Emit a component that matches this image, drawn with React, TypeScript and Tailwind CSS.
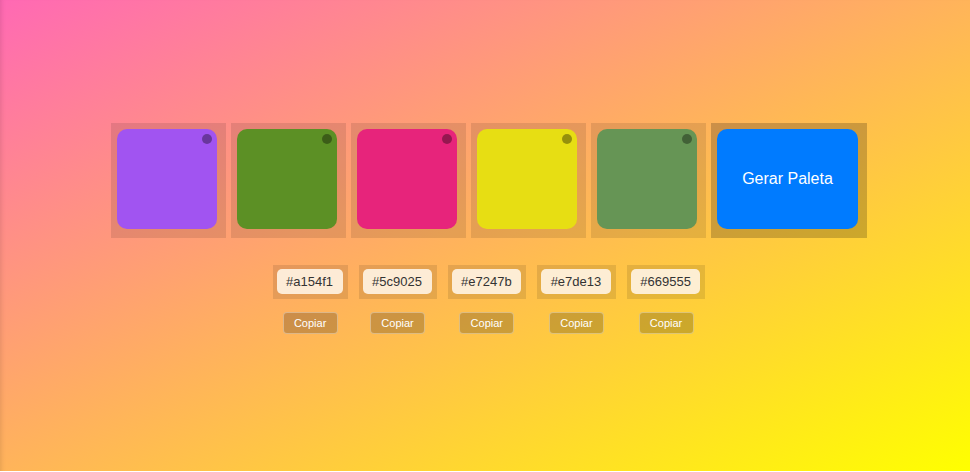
const cores = ["#a154f1", "#5c9025", "#e7247b", "#e7de13", "#669555"];

const Caixa = ({ cor }: { cor: string }) => {
  return (
    <div className="pl-1.5 pt-1.5 pr-[9px] pb-[9px] bg-black/10">
      <div className="relative w-[100px] h-[100px] rounded-[10px]" style={{ backgroundColor: cor }}>
        <span className="absolute top-[5px] right-[5px] w-2.5 h-2.5 rounded-full bg-black/35"></span>
      </div>
    </div>
  );
};

const App = () => {
  return (
    <div className="w-full h-[471px] bg-[linear-gradient(to_bottom_right,#ff69b4,#ffff00)] shadow-[inset_5px_0_5px_-4px_rgba(0,0,0,0.12)] font-['Liberation_Sans',Arial,sans-serif] pl-2 pt-[123px]">
      <div className="flex justify-center gap-[5px]">
        {cores.map((c) => (
          <Caixa key={c} cor={c} />
        ))}
        <div className="pl-1.5 pt-1.5 pr-[9px] pb-[9px] bg-black/20">
          <button className="w-[141px] h-[100px] rounded-[10px] bg-[#007bff] text-white text-[16px]">
            Gerar Paleta
          </button>
        </div>
      </div>

      <div className="flex justify-center gap-[11px] mt-[27px]">
        {cores.map((c) => (
          <div key={c} className="flex flex-col items-center">
            <div className="pl-1 pt-1 pr-[5px] pb-[5px] bg-black/10">
              <div className="px-[9.5px] h-[25px] flex items-center rounded-[5px] bg-[#fff4e4]/90 text-[13px] text-[#333]">
                {c}
              </div>
            </div>
            <button className="mt-[13px] w-[55px] h-[22px] rounded-[4px] border border-white/35 bg-black/20 text-white text-[11px]">
              Copiar
            </button>
          </div>
        ))}
      </div>
    </div>
  );
};

export default App;
